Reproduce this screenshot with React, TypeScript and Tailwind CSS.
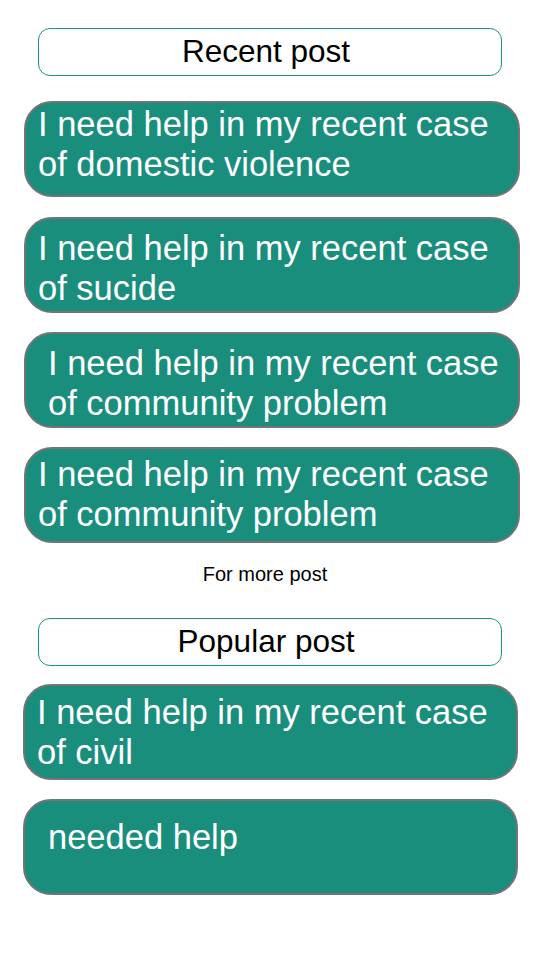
import React from "react";

type Post = { lines: string[]; pl: string; pt: string; mt: string; x: string };

const recent: Post[] = [
  { lines: ["I need help in my recent case", "of domestic violence"], pl: "pl-[12px]", pt: "pt-[1px]", mt: "mt-[25px]", x: "ml-[24px] w-[496px]" },
  { lines: ["I need help in my recent case", "of sucide"], pl: "pl-[12px]", pt: "pt-[9px]", mt: "mt-[20px]", x: "ml-[24px] w-[496px]" },
  { lines: ["I need help in my recent case", "of community problem"], pl: "pl-[22px]", pt: "pt-[9px]", mt: "mt-[19px]", x: "ml-[24px] w-[496px]" },
  { lines: ["I need help in my recent case", "of community problem"], pl: "pl-[12px]", pt: "pt-[5px]", mt: "mt-[19px]", x: "ml-[24px] w-[496px]" },
];

const popular: Post[] = [
  { lines: ["I need help in my recent case", "of civil"], pl: "pl-[12px]", pt: "pt-[6px]", mt: "mt-[18px]", x: "ml-[23px] w-[495px]" },
  { lines: ["needed help"], pl: "pl-[23px]", pt: "pt-[16px]", mt: "mt-[19px]", x: "ml-[23px] w-[495px]" },
];

const Header = ({ title, mt }: { title: string; mt: string }) => (
  <div className={`${mt} ml-[38px] w-[464px] h-[48px] rounded-[12px] border-[1.5px] border-[#1a9384] bg-white flex items-center justify-center text-[31.5px] text-black`}>
    <span className="-ml-[8px]">{title}</span>
  </div>
);

const PostCard = ({ post }: { post: Post }) => (
  <div className={`${post.mt} ${post.x} ${post.pl} ${post.pt} h-[96px] rounded-[28px] border-2 border-[#747474] bg-[#1a8e7d] text-white text-[34.5px] leading-[40px]`}>
    {post.lines.map((l, i) => (
      <div key={i}>{l}</div>
    ))}
  </div>
);

export default function App() {
  return (
    <div className="w-[540px] h-[960px] bg-white pt-[28px] flex flex-col font-['Liberation_Sans',Arial,sans-serif]">
      <Header title="Recent post" mt="mt-0" />
      {recent.map((p, i) => (
        <PostCard key={i} post={p} />
      ))}
      <div className="mt-[19px] text-center text-[20px] leading-[24px] text-black pr-[10px]">For more post</div>
      <Header title="Popular post" mt="mt-[32px]" />
      {popular.map((p, i) => (
        <PostCard key={i} post={p} />
      ))}
    </div>
  );
}
